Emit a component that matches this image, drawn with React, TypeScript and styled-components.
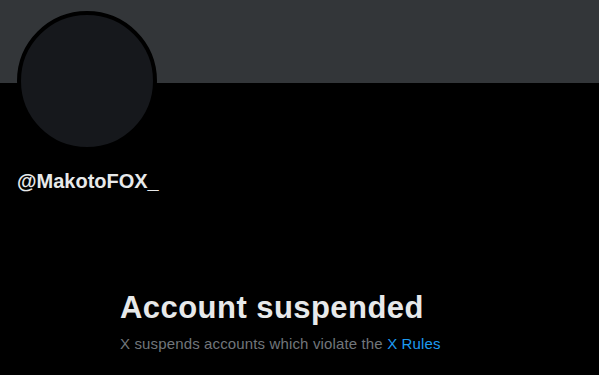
import React from "react";
import styled, { createGlobalStyle } from "styled-components";

const GlobalStyle = createGlobalStyle`
  html, body {
    margin: 0;
    padding: 0;
    background: #000000;
  }
  body {
    font-family: "Liberation Sans", Arial, sans-serif;
    width: 599px;
    height: 375px;
    overflow: hidden;
  }
`;

const Page = styled.div`
  display: flex;
  flex-direction: column;
  width: 599px;
  height: 375px;
  background: #000000;
`;

const Banner = styled.div`
  height: 83px;
  background: #333639;
  flex-shrink: 0;
`;

const Profile = styled.div`
  display: flex;
  flex-direction: column;
  align-items: flex-start;
  padding: 0 16px;
`;

const Avatar = styled.div`
  box-sizing: border-box;
  width: 140px;
  height: 140px;
  margin-top: -72px;
  margin-left: 1px;
  border-radius: 50%;
  border: 4px solid #000000;
  background: #16181c;
`;

const Handle = styled.div`
  margin-top: 18px;
  margin-left: 1px;
  font-size: 20px;
  line-height: 24px;
  font-weight: 700;
  color: #e7e9ea;
`;

const Notice = styled.div`
  display: flex;
  flex-direction: column;
  margin-top: 97px;
  padding-left: 120px;
`;

const Title = styled.h1`
  margin: 0;
  font-size: 31px;
  line-height: 36px;
  font-weight: 800;
  letter-spacing: 0.45px;
  color: #e7e9ea;
`;

const Subtitle = styled.p`
  margin: 8px 0 0;
  font-size: 15px;
  line-height: 20px;
  letter-spacing: 0.14px;
  color: #71767b;
`;

const Link = styled.a`
  color: #1d9bf0;
  text-decoration: none;
`;

export default function App() {
  return (
    <>
      <GlobalStyle />
      <Page>
        <Banner />
        <Profile>
          <Avatar />
          <Handle>@MakotoFOX_</Handle>
        </Profile>
        <Notice>
          <Title>Account suspended</Title>
          <Subtitle>
            X suspends accounts which violate the <Link href="#">X Rules</Link>
          </Subtitle>
        </Notice>
      </Page>
    </>
  );
}
